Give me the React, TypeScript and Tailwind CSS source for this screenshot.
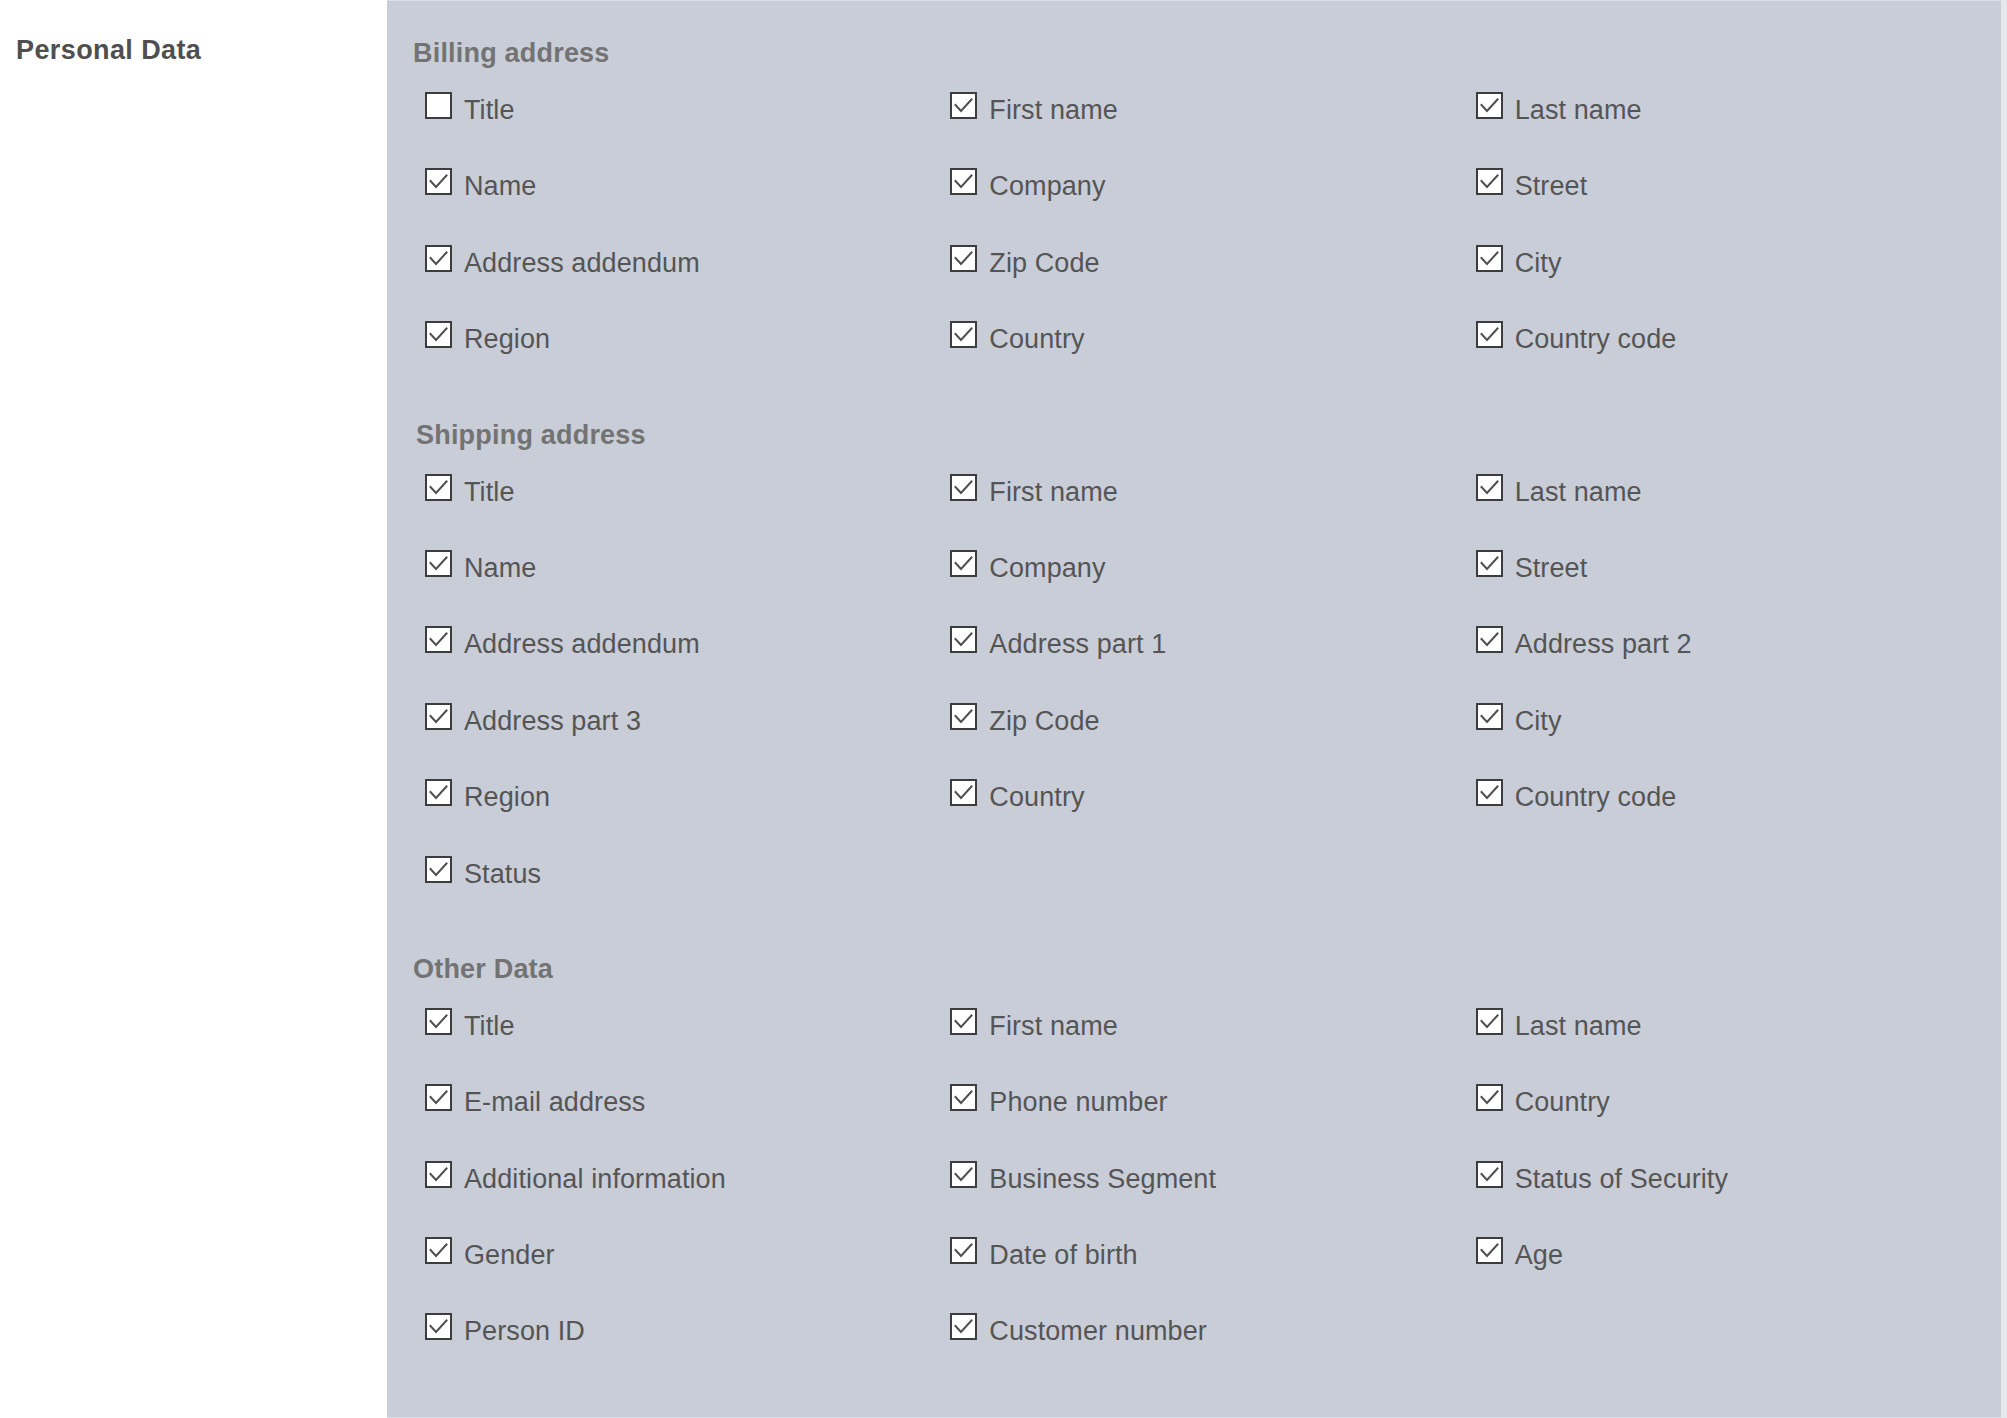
import React, { useState } from 'react';

interface Field {
  label: string;
  checked: boolean;
}

interface Section {
  title: string;
  offset?: string;
  fields: Field[];
}

const on = (label: string): Field => ({ label, checked: true });

const sections: Section[] = [
  {
    title: 'Billing address',
    fields: [
      { label: 'Title', checked: false },
      on('First name'),
      on('Last name'),
      on('Name'),
      on('Company'),
      on('Street'),
      on('Address addendum'),
      on('Zip Code'),
      on('City'),
      on('Region'),
      on('Country'),
      on('Country code'),
    ],
  },
  {
    title: 'Shipping address',
    offset: 'ml-[3px]',
    fields: [
      on('Title'),
      on('First name'),
      on('Last name'),
      on('Name'),
      on('Company'),
      on('Street'),
      on('Address addendum'),
      on('Address part 1'),
      on('Address part 2'),
      on('Address part 3'),
      on('Zip Code'),
      on('City'),
      on('Region'),
      on('Country'),
      on('Country code'),
      on('Status'),
    ],
  },
  {
    title: 'Other Data',
    fields: [
      on('Title'),
      on('First name'),
      on('Last name'),
      on('E-mail address'),
      on('Phone number'),
      on('Country'),
      on('Additional information'),
      on('Business Segment'),
      on('Status of Security'),
      on('Gender'),
      on('Date of birth'),
      on('Age'),
      on('Person ID'),
      on('Customer number'),
    ],
  },
];

const CheckBox: React.FC<{ checked: boolean }> = ({ checked }) => (
  <span className="flex h-[27px] w-[27px] shrink-0 items-center justify-center border-2 border-[#3d3d3d] bg-white">
    {checked && (
      <svg width="23" height="23" viewBox="0 0 23 23" fill="none">
        <polyline
          points="3.5,11 9,17 19.5,5.5"
          stroke="#505050"
          strokeWidth="2"
          strokeLinecap="square"
          strokeLinejoin="miter"
        />
      </svg>
    )}
  </span>
);

const FieldItem: React.FC<{ field: Field }> = ({ field }) => {
  const [checked, setChecked] = useState(field.checked);
  return (
    <label
      className="flex cursor-pointer items-start gap-[12px]"
      onClick={(e) => {
        e.preventDefault();
        setChecked(!checked);
      }}
    >
      <CheckBox checked={checked} />
      <span className="mt-[5px] whitespace-nowrap text-[27px] leading-[27px] tracking-[0.1px] text-[#555555]">
        {field.label}
      </span>
    </label>
  );
};

export default function App() {
  return (
    <div
      className="flex h-[1418px] w-full bg-white"
      style={{ fontFamily: '"Liberation Sans", Arial, sans-serif' }}
    >
      <div className="w-[387px] shrink-0 pl-[16px] pt-[35px]">
        <h2 className="text-[27px] font-bold leading-[31px] tracking-[0.4px] text-[#4f4f4f]">
          Personal Data
        </h2>
      </div>

      <div className="flex h-full w-[1614px] shrink-0 flex-col gap-[22px] border-t border-b border-[#dcdfe6] bg-[#c9cdd8] pl-[26px] pt-[37px]">
        {sections.map((section) => (
          <section key={section.title} className="flex flex-col">
            <h3
              className={`mb-[23px] text-[27px] font-bold leading-[31px] tracking-[0.2px] text-[#737373] ${section.offset ?? ''}`}
            >
              {section.title}
            </h3>
            <div className="ml-[12px] grid grid-cols-3 auto-rows-[76.4px]">
              {section.fields.map((f, i) => (
                <FieldItem key={i} field={f} />
              ))}
            </div>
          </section>
        ))}
      </div>

      <div className="h-full flex-1 bg-[#e6e8ee]" />
    </div>
  );
}
